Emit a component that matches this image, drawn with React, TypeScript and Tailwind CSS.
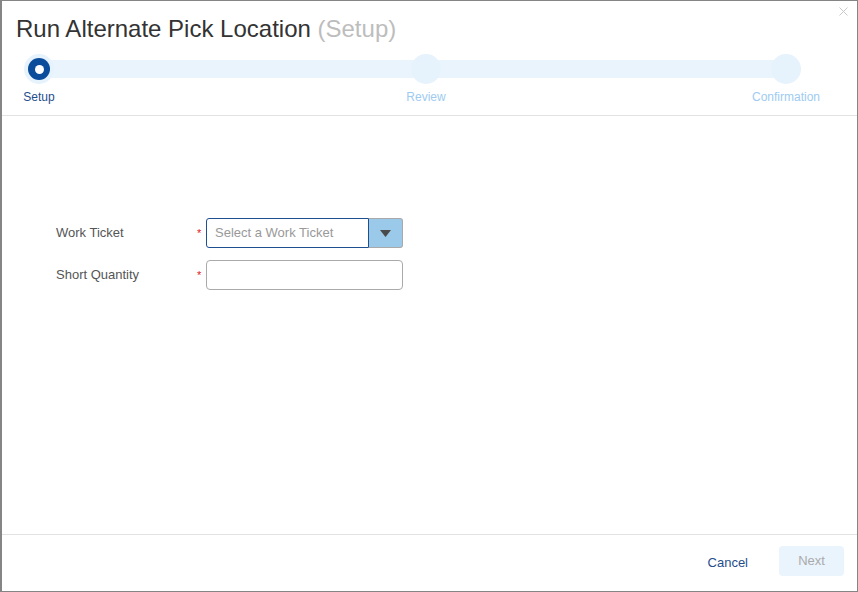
import React from 'react';

const steps = [
  { label: 'Setup', active: true },
  { label: 'Review', active: false },
  { label: 'Confirmation', active: false },
];

function Stepper() {
  return (
    <div className="relative mt-[10px] flex items-start pl-[7px]">
      {/* track */}
      <div className="absolute left-[37px] top-[6px] h-[18px] w-[748px] bg-[#eaf4fd]" />
      <div className="relative flex w-[60px] flex-col items-center">
        <div className="flex h-[30px] w-[30px] items-center justify-center rounded-full bg-[#e6f2fc]">
          <div className="flex h-[22px] w-[22px] items-center justify-center rounded-full bg-[#0b4c9b]">
            <div className="h-[9px] w-[9px] rounded-full bg-white" />
          </div>
        </div>
        <span className="mt-[6px] text-[12px] leading-[14px] text-[#1f4e8c]">{steps[0].label}</span>
      </div>
      <div className="relative ml-[317px] flex w-[80px] flex-col items-center">
        <div className="h-[30px] w-[30px] rounded-full bg-[#e6f2fc]" />
        <span className="mt-[6px] text-[12px] leading-[14px] text-[#9ecbf1]">{steps[1].label}</span>
      </div>
      <div className="relative ml-[275px] flex w-[90px] flex-col items-center">
        <div className="h-[30px] w-[30px] rounded-full bg-[#e6f2fc]" />
        <span className="mt-[6px] text-[12px] leading-[14px] text-[#9ecbf1]">{steps[2].label}</span>
      </div>
    </div>
  );
}

export default function App() {
  return (
    <div
      className="relative flex h-[592px] w-[858px] flex-col border border-l-2 border-[#858585] bg-white"
      style={{ fontFamily: '"Liberation Sans", Arial, sans-serif' }}
    >
      {/* close */}
      <button className="absolute right-[9px] top-[6px] text-[#c8c8c8]">
        <svg width="9" height="9" viewBox="0 0 9 9">
          <path d="M0.5 0.5L8.5 8.5M8.5 0.5L0.5 8.5" stroke="currentColor" strokeWidth="1" />
        </svg>
      </button>

      {/* Header */}
      <div className="border-b border-[#e2e2e2] pb-[11px] pt-[13px]">
        <h1 className="pl-[14px] text-[24px] font-normal leading-[30px] text-[#333333]">
          Run Alternate Pick Location <span className="text-[#bdbdbd]">(Setup)</span>
        </h1>
        <Stepper />
      </div>

      {/* Body */}
      <div className="flex-1 pt-[102px]">
        <div className="flex flex-col gap-[12px] pl-[54px]">
          <div className="flex items-center">
            <label className="w-[141px] text-[13px] text-[#555555]">Work Ticket</label>
            <span className="w-[9px] text-[11px] text-[#e02020]">*</span>
            <div className="flex h-[30px] w-[197px]">
              <div className="flex flex-1 items-center rounded-l-[3px] border border-[#1d4f91] pl-[8px] text-[13px] text-[#999999]">
                Select a Work Ticket
              </div>
              <div className="flex w-[34px] items-center justify-center rounded-r-[3px] border border-l-0 border-[#a9a9a9] bg-[#9bc9ea]">
                <svg width="11" height="7" viewBox="0 0 11 7">
                  <path d="M0 0H11L5.5 7Z" fill="#4a4a4a" />
                </svg>
              </div>
            </div>
          </div>
          <div className="flex items-center">
            <label className="w-[141px] text-[13px] text-[#555555]">Short Quantity</label>
            <span className="w-[9px] text-[11px] text-[#e02020]">*</span>
            <input className="h-[30px] w-[197px] rounded-[4px] border border-[#aaaaaa] px-2 text-[13px] outline-none" />
          </div>
        </div>
      </div>

      {/* Footer */}
      <div className="flex h-[57px] items-start justify-end gap-[31px] border-t border-[#e2e2e2] pr-[13px] pt-[11px]">
        <button className="mt-[7px] text-[13px] text-[#1f4e8c]">Cancel</button>
        <button className="h-[30px] w-[65px] rounded-[4px] bg-[#eaf4fd] text-[13px] text-[#aaaaaa]">
          Next
        </button>
      </div>
    </div>
  );
}
